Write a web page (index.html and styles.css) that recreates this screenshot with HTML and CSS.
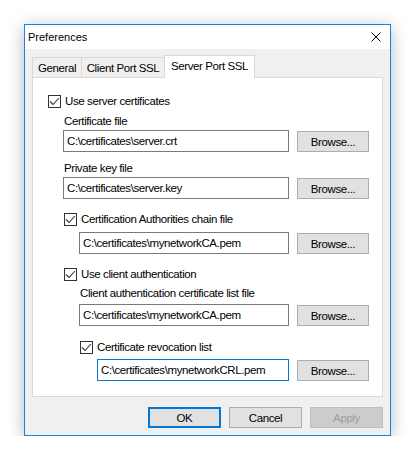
FILE: index.html
```html
<!DOCTYPE html>
<html>
<head>
<meta charset="utf-8">
<link rel="stylesheet" href="styles.css">
</head>
<body>
<div class="window">
  <div class="titlebar">
    <span class="title">Preferences</span>
    <svg class="close" width="10" height="10" viewBox="0 0 10 10"><path d="M0.5 0.5 L9.5 9.5 M9.5 0.5 L0.5 9.5" stroke="#000" stroke-width="1" fill="none"/></svg>
  </div>
  <div class="body">
    <div class="tabs">
      <div class="tab t-general">General</div>
      <div class="tab t-client">Client Port SSL</div>
      <div class="tab t-server active">Server Port SSL</div>
    </div>
    <div class="panel">
      <div class="check lvl0 r-cb1"><span class="box"><svg width="11" height="11" viewBox="0 0 11 11"><path d="M1 5.5 L4 8.5 L10 2" stroke="#333" stroke-width="1.1" fill="none"/></svg></span>Use server certificates</div>
      <div class="label lvl1 r-l1">Certificate file</div>
      <div class="field f1 r-f1"><div class="input">C:\certificates\server.crt</div><div class="btn browse">Browse...</div></div>
      <div class="label lvl1 r-l2">Private key file</div>
      <div class="field f1 r-f2"><div class="input">C:\certificates\server.key</div><div class="btn browse">Browse...</div></div>
      <div class="check lvl1 r-cb2"><span class="box"><svg width="11" height="11" viewBox="0 0 11 11"><path d="M1 5.5 L4 8.5 L10 2" stroke="#333" stroke-width="1.1" fill="none"/></svg></span>Certification Authorities chain file</div>
      <div class="field f2 r-f3"><div class="input">C:\certificates\mynetworkCA.pem</div><div class="btn browse">Browse...</div></div>
      <div class="check lvl1 r-cb3"><span class="box"><svg width="11" height="11" viewBox="0 0 11 11"><path d="M1 5.5 L4 8.5 L10 2" stroke="#333" stroke-width="1.1" fill="none"/></svg></span>Use client authentication</div>
      <div class="label lvl2 r-l3">Client authentication certificate list file</div>
      <div class="field f2 r-f4"><div class="input">C:\certificates\mynetworkCA.pem</div><div class="btn browse">Browse...</div></div>
      <div class="check lvl2 r-cb4"><span class="box"><svg width="11" height="11" viewBox="0 0 11 11"><path d="M1 5.5 L4 8.5 L10 2" stroke="#333" stroke-width="1.1" fill="none"/></svg></span>Certificate revocation list</div>
      <div class="field f3 r-f5"><div class="input focused">C:\certificates\mynetworkCRL.pem</div><div class="btn browse">Browse...</div></div>
    </div>
    <div class="buttons">
      <div class="btn dlg default">OK</div>
      <div class="btn dlg">Cancel</div>
      <div class="btn dlg disabled">Apply</div>
    </div>
  </div>
</div>
</body>
</html>
```
FILE: styles.css
```css
* { box-sizing: border-box; }
html, body { margin: 0; padding: 0; background: #fff; }
body {
  font-family: "Liberation Sans", Arial, sans-serif;
  font-size: 11.5px;
  letter-spacing: -0.4px;
  color: #000;
}
.window {
  margin: 24px 0 0 24px;
  width: 367px;
  height: 412px;
  border: 1px solid #1a82d8;
  background: #f0f0f0;
  box-shadow: 0 3px 16px rgba(0,0,0,0.28);
  display: flex;
  flex-direction: column;
}
.titlebar {
  height: 24px;
  background: #fff;
  display: flex;
  align-items: center;
  justify-content: space-between;
  padding: 0 9px 0 3px;
}
.title {
  font-size: 11px;
  letter-spacing: 0;
  line-height: 14px;
}
.close { display: block; }
.body {
  flex: 1;
  display: flex;
  flex-direction: column;
  padding: 6px 0 0 7px;
}
.tabs {
  display: flex;
  align-items: flex-end;
  height: 23px;
  margin-bottom: -1px;
  position: relative;
}
.tab {
  height: 21px;
  border: 1px solid #d9d9d9;
  border-bottom: none;
  background: #f0f0f0;
  display: flex;
  align-items: center;
  justify-content: center;
  padding-bottom: 1px;
  white-space: nowrap;
}
.t-general { width: 50px; }
.t-client { width: 84px; margin-left: -1px; }
.t-server { width: 91px; margin-left: -1px; }
.tab.active {
  height: 23px;
  background: #fff;
  position: relative;
  z-index: 2;
  padding-bottom: 2px;
}
.panel {
  position: relative;
  z-index: 1;
  width: 351px;
  height: 320px;
  background: #fff;
  border: 1px solid #d9d9d9;
  padding: 0 13px 0 0;
}
.check {
  display: flex;
  align-items: center;
  height: 13px;
  line-height: 13px;
  white-space: nowrap;
}
.box {
  width: 13px;
  height: 13px;
  border: 1px solid #333;
  background: #fff;
  margin-right: 4px;
  flex: none;
  display: flex;
  align-items: center;
  justify-content: center;
}
.box svg { display: block; }
.label {
  height: 14px;
  line-height: 14px;
  white-space: nowrap;
}
.lvl0 { margin-left: 15px; }
.lvl1 { margin-left: 31px; }
.lvl2 { margin-left: 47px; }
.field {
  display: flex;
  align-items: flex-end;
  gap: 8px;
  height: 22px;
}
.f1 { margin-left: 30px; }
.f2 { margin-left: 46px; }
.f3 { margin-left: 64px; }
.input {
  flex: 1;
  height: 22px;
  border: 1px solid #7a7a7a;
  background: #fff;
  padding: 0 3px;
  line-height: 20px;
  white-space: nowrap;
  overflow: hidden;
}
.input.focused { border-color: #0078d7; }
.btn {
  height: 21px;
  background: #e1e1e1;
  border: 1px solid #adadad;
  display: flex;
  align-items: center;
  justify-content: center;
  white-space: nowrap;
}
.browse { width: 72px; flex: none; }
.r-cb1 { margin-top: 17px; }
.r-l1 { margin-top: 6px; }
.r-f1 { margin-top: 2px; }
.r-l2 { margin-top: 9px; }
.r-f2 { margin-top: 2px; }
.r-cb2 { margin-top: 14px; }
.r-f3 { margin-top: 6px; }
.r-cb3 { margin-top: 14px; }
.r-l3 { margin-top: 5px; }
.r-f4 { margin-top: 4px; }
.r-cb4 { margin-top: 15px; }
.r-f5 { margin-top: 5px; }
.buttons {
  display: flex;
  justify-content: flex-end;
  gap: 8px;
  margin-top: 10px;
  padding-right: 7px;
}
.dlg { width: 73px; }
.dlg.default { border: 2px solid #0078d7; }
.dlg.disabled {
  background: #cccccc;
  border-color: #bfbfbf;
  color: #a0a0a0;
}
```
